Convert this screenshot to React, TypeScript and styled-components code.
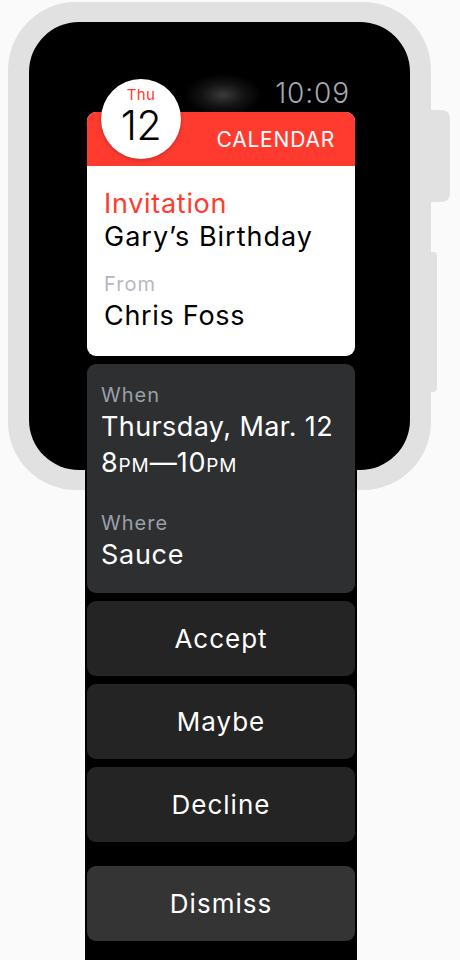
import React from "react";
import styled, { createGlobalStyle } from "styled-components";

const Global = createGlobalStyle`
  html, body { margin: 0; padding: 0; background: #fafafa; }
  body { font-family: "Inter", "Roboto", "Noto Sans", sans-serif; -webkit-font-smoothing: antialiased; }
  #root { height: 960px; }
`;

const Page = styled.div`
  position: relative;
  width: 460px;
  height: 960px;
  overflow: hidden;
  background: #fafafa;
  padding: 2px 0 0 8px;
  box-sizing: border-box;
`;

const Case = styled.div`
  position: relative;
  width: 423px;
  height: 488px;
  box-sizing: border-box;
  padding: 20px 21px;
  border-radius: 68px;
  background: #e1e1e1;
`;

const Screen = styled.div`
  width: 100%;
  height: 100%;
  border-radius: 50px;
  background: #000;
`;

const Crown = styled.div`
  position: absolute;
  left: 421px;
  top: 108px;
  width: 21px;
  height: 92px;
  border-radius: 0 8px 8px 0;
  background: #e1e1e1;
`;

const SideButton = styled.div`
  position: absolute;
  left: 421px;
  top: 250px;
  width: 8px;
  height: 140px;
  border-radius: 0 4px 4px 0;
  background: #e1e1e1;
`;

const Column = styled.div`
  position: absolute;
  left: 85px;
  top: 76px;
  bottom: 0;
  width: 272px;
  box-sizing: border-box;
  padding: 0 2px;
  background: #000;
  display: flex;
  flex-direction: column;
`;

const StatusRow = styled.div`
  position: relative;
  height: 36px;
  display: flex;
  justify-content: flex-end;
  align-items: flex-start;
`;

const Glow = styled.div`
  position: absolute;
  left: 98px;
  top: -2px;
  width: 76px;
  height: 42px;
  background: radial-gradient(ellipse at center, rgba(62, 60, 60, 0.95) 0%, rgba(32, 31, 31, 0.6) 40%, rgba(0, 0, 0, 0) 72%);
`;

const Time = styled.div`
  position: relative;
  margin-right: 5px;
  font-size: 28px;
  font-weight: 300;
  line-height: 34px;
  color: #a5a8b2;
  letter-spacing: 0.9px;
`;

const NoticeCard = styled.div`
  position: relative;
  border-radius: 9px;
  background: #fff;
`;

const CardHeader = styled.div`
  height: 54px;
  border-radius: 9px 9px 0 0;
  background: #ff3b30;
  display: flex;
  align-items: center;
  justify-content: flex-end;
  padding-right: 20px;
`;

const AppName = styled.div`
  color: #fff;
  font-size: 21px;
  letter-spacing: 0.8px;
  font-weight: 400;
`;

const DateBadge = styled.div`
  position: absolute;
  left: 14px;
  top: -33px;
  width: 80px;
  height: 80px;
  border-radius: 50%;
  background: #fff;
  box-shadow: 0 1px 4px rgba(0, 0, 0, 0.25);
  display: flex;
  flex-direction: column;
  align-items: center;
  padding-top: 7px;
  box-sizing: border-box;
`;

const BadgeDay = styled.div`
  color: #ff3b30;
  font-size: 15px;
  line-height: 18px;
  letter-spacing: 0.4px;
`;

const BadgeNum = styled.div`
  color: #000;
  font-size: 41px;
  font-weight: 300;
  line-height: 43px;
  letter-spacing: -0.5px;
`;

const CardBody = styled.div`
  padding: 21px 16px 22px 17px;
  display: flex;
  flex-direction: column;
`;

const Label = styled.div<{ $dark?: boolean; $gap?: number }>`
  font-size: 20px;
  line-height: 28px;
  letter-spacing: 1px;
  color: ${(p) => (p.$dark ? "#9c9fa8" : "#b5b8c2")};
  margin-top: ${(p) => p.$gap ?? 0}px;
`;

const Value = styled.div<{ $color?: string; $lh?: number; $ls?: number }>`
  font-size: 27px;
  line-height: ${(p) => p.$lh ?? 36}px;
  letter-spacing: ${(p) => p.$ls ?? 0.7}px;
  color: ${(p) => p.$color ?? "#000"};
`;

const DarkCard = styled.div`
  margin-top: 8px;
  border-radius: 9px;
  background: #2e2f31;
  padding: 17px 14px 21px 14px;
  display: flex;
  flex-direction: column;
`;

const Small = styled.span`
  font-size: 19px;
  letter-spacing: 1px;
`;

const Dash = styled.span`
  letter-spacing: 0;
`;

const ActionButton = styled.div<{ $variant?: "dismiss" }>`
  margin-top: ${(p) => (p.$variant ? 24 : 8)}px;
  height: 75px;
  flex-shrink: 0;
  border-radius: 9px;
  background: ${(p) => (p.$variant ? "#343434" : "#242424")};
  color: #fff;
  font-size: 26px;
  display: flex;
  align-items: center;
  justify-content: center;
  letter-spacing: 1px;
`;

export default function App() {
  return (
    <>
      <Global />
      <Page>
        <Case>
          <Screen />
          <Crown />
          <SideButton />
        </Case>
        <Column>
          <StatusRow>
            <Glow />
            <Time>10:09</Time>
          </StatusRow>
          <NoticeCard>
            <CardHeader>
              <AppName>CALENDAR</AppName>
            </CardHeader>
            <DateBadge>
              <BadgeDay>Thu</BadgeDay>
              <BadgeNum>12</BadgeNum>
            </DateBadge>
            <CardBody>
              <Value $color="#ff3b30" $lh={33}>Invitation</Value>
              <Value $lh={33} $ls={1}>Gary’s Birthday</Value>
              <Label $gap={17}>From</Label>
              <Value>Chris Foss</Value>
            </CardBody>
          </NoticeCard>
          <DarkCard>
            <Label $dark>When</Label>
            <Value $color="#fff" $ls={0.4}>Thursday, Mar. 12</Value>
            <Value $color="#fff">
              8<Small>PM</Small>
              <Dash>—</Dash>10<Small>PM</Small>
            </Value>
            <Label $dark $gap={25}>Where</Label>
            <Value $color="#fff" $lh={35}>Sauce</Value>
          </DarkCard>
          <ActionButton>Accept</ActionButton>
          <ActionButton>Maybe</ActionButton>
          <ActionButton>Decline</ActionButton>
          <ActionButton $variant="dismiss">Dismiss</ActionButton>
        </Column>
      </Page>
    </>
  );
}
